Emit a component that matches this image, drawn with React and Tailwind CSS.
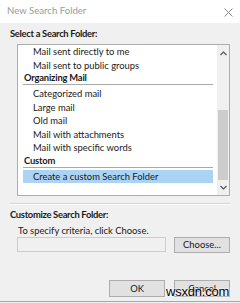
import React from "react";

const font = { fontFamily: 'Lato, "Noto Sans", sans-serif' };

function Item({ children }) {
  return (
    <div className="h-[13.5px] leading-[13.5px] pl-[10px] whitespace-nowrap">{children}</div>
  );
}

function Header({ children }) {
  return (
    <div className="mb-[2px]">
      <div className="h-[12px] leading-[12px] pl-[1px] font-bold tracking-[-0.2px] whitespace-nowrap">{children}</div>
      <div className="h-px bg-[#a8a8a8]" />
    </div>
  );
}

export default function App() {
  return (
    <div
      className="relative w-[240px] h-[303px] bg-[#f0f0f0] overflow-hidden text-[9.4px] text-[#1a1a1a]"
      style={font}
    >
      <div className="h-[23px] bg-white flex items-center justify-between pl-[7px] pr-[7px]">
        <span className="text-[9.6px] text-[#9a9a9a]">New Search Folder</span>
        <svg width="9" height="9" viewBox="0 0 9 9" className="mt-[1px]">
          <path d="M0.5 0.5 L8.5 8.5 M8.5 0.5 L0.5 8.5" stroke="#8a8a8a" strokeWidth="1" />
        </svg>
      </div>

      <div className="pl-[10px] pt-[5px] h-[21px] leading-[12px] font-bold tracking-[-0.3px]">Select a Search Folder:</div>

      <div className="ml-[17px] w-[213px] h-[152px] border border-[#adadad] bg-white flex">
        <div className="flex-1 pl-[5px] pr-[4px]">
          <Item>Mail sent directly to me</Item>
          <Item>Mail sent to public groups</Item>
          <Header>Organizing Mail</Header>
          <Item>Categorized mail</Item>
          <Item>Large mail</Item>
          <Item>Old mail</Item>
          <Item>Mail with attachments</Item>
          <Item>Mail with specific words</Item>
          <Header>Custom</Header>
          <div className="h-[13.5px] leading-[13.5px] pl-[10px] bg-[#aad3f4] whitespace-nowrap">
            Create a custom Search Folder
          </div>
        </div>
        <div className="w-[12px] bg-[#f0f0f0] flex flex-col items-center">
          <div className="h-[15px] flex items-center justify-center pt-[2px]">
            <svg width="7" height="5" viewBox="0 0 7 5">
              <path d="M0.5 4 L3.5 1 L6.5 4" stroke="#555" strokeWidth="1.2" fill="none" />
            </svg>
          </div>
          <div className="h-[50px]" />
          <div className="w-[10px] h-[70px] bg-[#cdcdcd]" />
          <div className="flex-1 flex items-center justify-center">
            <svg width="7" height="5" viewBox="0 0 7 5">
              <path d="M0.5 1 L3.5 4 L6.5 1" stroke="#555" strokeWidth="1.2" fill="none" />
            </svg>
          </div>
        </div>
      </div>

      <div className="ml-[9px] mr-[9px] mt-[7px] border-t border-[#d5d5d5] border-b border-b-white" />

      <div className="pl-[10px] pt-[4px] h-[20px] leading-[12px] font-bold tracking-[-0.3px]">Customize Search Folder:</div>
      <div className="pl-[18px] h-[12px] leading-[12px]">To specify criteria, click Choose.</div>

      <div className="flex pl-[17px] gap-[8px]">
        <div className="w-[149px] h-[15px] border border-[#cccccc] bg-[#f0f0f0]" />
        <button className="w-[56px] h-[16px] border border-[#adadad] bg-[#e1e1e1] text-[9.4px] leading-[14px]">
          Choose...
        </button>
      </div>

      <div className="flex justify-end gap-[9px] pr-[10px] mt-[27px]">
        <button className="w-[56px] h-[17px] border border-[#adadad] bg-[#e1e1e1] text-[9.4px] leading-[15px]">
          OK
        </button>
        <button className="w-[56px] h-[17px] border border-[#adadad] bg-[#e1e1e1] text-[9.4px] leading-[15px]">
          Cancel
        </button>
      </div>

      <div className="absolute left-0 right-0 top-[301px] h-px bg-[#a8a8a8]" />
      <div
        className="absolute left-[166px] top-[284px] text-[13px] leading-[16px] text-black tracking-[-0.2px]"
        style={{ fontFamily: '"Liberation Sans", sans-serif', textShadow: "0 0 2px #fff, 0 0 2px #fff" }}
      >
        wsxdn.com
      </div>
    </div>
  );
}
